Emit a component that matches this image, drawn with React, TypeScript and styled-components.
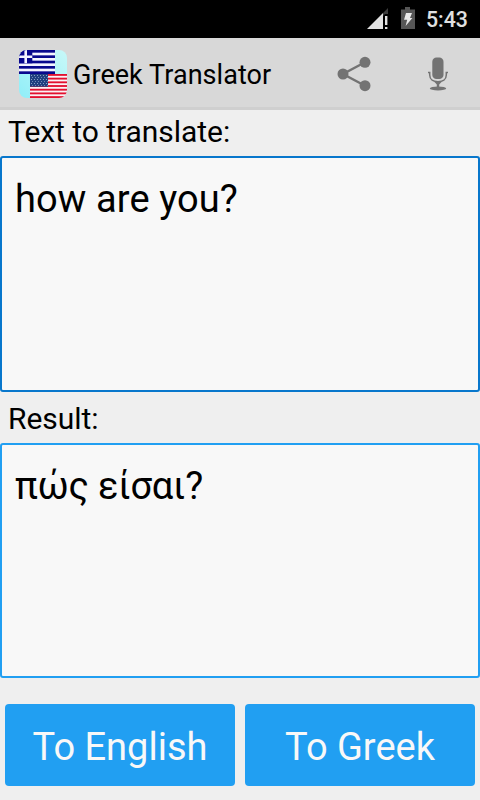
import React from "react";
import styled, { createGlobalStyle } from "styled-components";

const GlobalStyle = createGlobalStyle`
  * { box-sizing: border-box; }
  body { margin: 0; background: #efefef; }
`;

const Screen = styled.div`
  width: 480px;
  height: 800px;
  display: flex;
  flex-direction: column;
  overflow: hidden;
  background: #efefef;
  color: #000;
  font-family: Roboto, "Noto Sans", sans-serif;
`;

const StatusBar = styled.div`
  height: 38px;
  flex: none;
  display: flex;
  align-items: flex-start;
  justify-content: flex-end;
  padding: 7px 12px 0 0;
  background: #000;
`;

const SignalIcon = styled.svg`
  margin-right: 12px;
`;

const BatteryIcon = styled.svg`
  margin-right: 11px;
`;

const Clock = styled.span`
  width: 42px;
  line-height: 26px;
  font-size: 21.3px;
  font-weight: 500;
  color: #e0e0e0;
  white-space: nowrap;
`;

const Header = styled.header`
  height: 72px;
  flex: none;
  display: flex;
  align-items: center;
  padding: 3px 31px 0 19px;
  background: #d8d8d8;
  border-bottom: 3px solid #cfcfcf;
`;

const Title = styled.h1`
  flex: 1;
  margin: 2px 0 0 6px;
  font-size: 27px;
  line-height: 34px;
  font-weight: 400;
  letter-spacing: 0.05px;
  white-space: nowrap;
`;

const Actions = styled.div`
  display: flex;
  align-items: center;
  gap: 56px;
  margin-bottom: 1px;
`;

const Label = styled.label<{ $height: number; $top: number }>`
  flex: none;
  height: ${(p) => p.$height}px;
  padding: ${(p) => p.$top}px 8px 0;
  font-size: 30px;
  line-height: 36px;
  letter-spacing: -0.04px;
`;

const TextPanel = styled.div<{ $height: number; $border: string }>`
  flex: none;
  height: ${(p) => p.$height}px;
  padding: 18px 13px;
  border: 2px solid ${(p) => p.$border};
  border-radius: 3px;
  background: #f8f8f8;
  font-size: 38px;
  line-height: 46px;
`;

const PanelText = styled.span<{ $tracking?: number }>`
  letter-spacing: ${(p) => p.$tracking ?? 0}px;
`;

const ButtonRow = styled.div`
  display: grid;
  grid-template-columns: 1fr 1fr;
  gap: 10px;
  padding: 26px 5px 0;
`;

const Button = styled.button`
  height: 82px;
  padding: 3px 0 0;
  border: 0;
  border-radius: 4px;
  background: #219ff2;
  color: #f8f8f8;
  font: 400 38px Roboto, sans-serif;
`;

const greekStripes = [0, 2, 4, 6, 8];
const usStripes = [0, 2, 4, 6, 8, 10, 12];

const AppIcon = () => (
  <svg width="48" height="48" viewBox="0 0 48 48">
    <defs>
      <linearGradient id="ice" x1="0" y1="1" x2="1" y2="0">
        <stop offset="0" stopColor="#90eef8" />
        <stop offset="1" stopColor="#c8f8f8" />
      </linearGradient>
      <clipPath id="tile">
        <rect width="48" height="48" rx="8" />
      </clipPath>
      <pattern id="stars" width="3" height="4" patternUnits="userSpaceOnUse" x="11" y="24">
        <rect x="1" y="1" width="1" height="1" fill="#8a9fc4" />
        <rect x="2" y="3" width="1" height="1" fill="#6e88b4" />
      </pattern>
    </defs>
    <g clipPath="url(#tile)">
      <rect width="48" height="48" fill="url(#ice)" />
      <rect width="36" height="24" fill="#f4f4ff" />
      {greekStripes.map((i) => (
        <rect key={i} y={(i * 24) / 9} width="36" height={24 / 9} fill="#08088e" />
      ))}
      <rect width="13.3" height="13.3" fill="#08088e" />
      <path d="M0 6.7H13.3M6.7 0V13.3" stroke="#f4f4ff" strokeWidth="2.6" />
      <rect x="11" y="24" width="37" height="24" fill="#fbf1f4" />
      {usStripes.map((i) => (
        <rect key={i} x="11" y={24 + (i * 24) / 13} width="37" height={24 / 13} fill="#e2102f" />
      ))}
      <rect x="11" y="24" width="18" height="12.7" fill="#204080" />
      <rect x="11" y="24" width="18" height="12.7" fill="url(#stars)" />
    </g>
  </svg>
);

const App = () => (
  <>
    <GlobalStyle />
    <Screen>
      <StatusBar>
        <SignalIcon width="22" height="23" viewBox="367 7 22 23">
          <path d="M388 8V14H385L383 16V13Z" fill="#3c3c3c" />
          <path d="M367 29L383 13V29Z" fill="#e2e2e2" />
          <path d="M385 16h2.4v9H385zM385 27h2.4v2H385z" fill="#e2e2e2" />
        </SignalIcon>
        <BatteryIcon width="14" height="22" viewBox="401 7 14 22">
          <path d="M405 7h5v2.5h5V29H401V9.5h4z" fill="#565656" />
          <path d="M406 13h6l-2 5h2.4l-6.8 8 1.6-6.2H404z" fill="#e8e8e8" />
        </BatteryIcon>
        <Clock>5:43</Clock>
      </StatusBar>
      <Header>
        <AppIcon />
        <Title>Greek Translator</Title>
        <Actions>
          <svg width="34" height="36" viewBox="337 56 34 36">
            <path d="M365 62.3L343 74L365 85.7" fill="none" stroke="#737373" strokeWidth="2.4" />
            <circle cx="365" cy="62.3" r="5.5" fill="#737373" />
            <circle cx="343" cy="74" r="5.5" fill="#737373" />
            <circle cx="365" cy="85.7" r="5.5" fill="#737373" />
          </svg>
          <svg width="22" height="36" viewBox="427 56 22 36">
            <rect x="432.3" y="57.5" width="11.2" height="21.6" rx="4.2" fill="#737373" />
            <path d="M428 72.4H429.7V75C429.7 79.5 433.5 81.7 438 81.7S446.3 79.5 446.3 75V72.4H448" fill="none" stroke="#737373" strokeWidth="1.5" />
            <path d="M434.5 82h7l-2.3 2.5V87h-2.4v-2.5z" fill="#737373" />
            <ellipse cx="438" cy="88.4" rx="8.2" ry="2" fill="#737373" />
          </svg>
        </Actions>
      </Header>
      <Label $height={46} $top={4}>Text to translate:</Label>
      <TextPanel $height={236} $border="#0877cc">
        <PanelText $tracking={0.1}>how are you?</PanelText>
      </TextPanel>
      <Label $height={51} $top={9}>Result:</Label>
      <TextPanel $height={235} $border="#219ff2">
        <PanelText $tracking={-0.2}>πώς είσαι?</PanelText>
      </TextPanel>
      <ButtonRow>
        <Button>To English</Button>
        <Button>To Greek</Button>
      </ButtonRow>
    </Screen>
  </>
);

export default App;
